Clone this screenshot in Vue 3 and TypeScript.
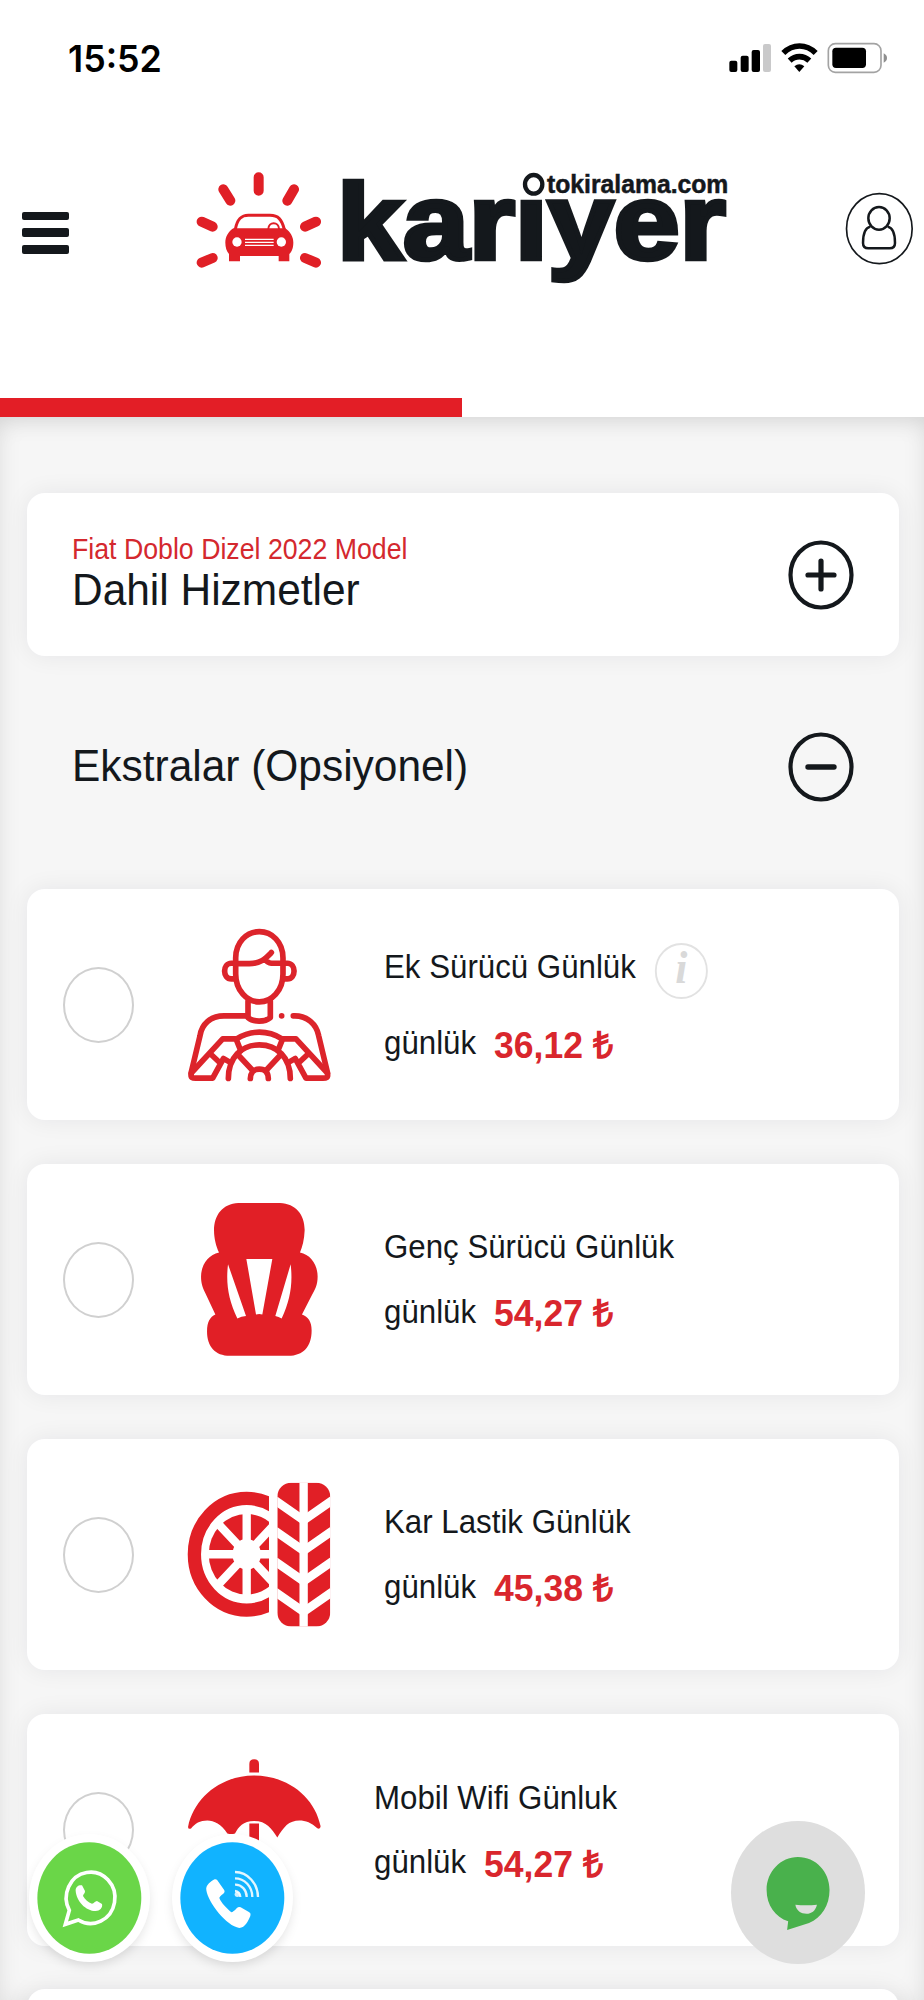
<script setup lang="ts">
type IconName = 'driver' | 'seat' | 'tire' | 'umbrella'

interface Extra {
  icon: IconName
  title: string
  price: string
  info?: boolean
}

const extras: Extra[] = [
  { icon: 'driver', title: 'Ek Sürücü Günlük', price: '36,12 ₺', info: true },
  { icon: 'seat', title: 'Genç Sürücü Günlük', price: '54,27 ₺' },
  { icon: 'tire', title: 'Kar Lastik Günlük', price: '45,38 ₺' },
  { icon: 'umbrella', title: 'Mobil Wifi Günluk', price: '54,27 ₺' },
]

const progress = 50
const chevrons = [212, 303.5, 395, 486.5]
</script>

<template>
  <div class="screen">
    <div class="status">
      <span class="time">15:52</span>
      <svg class="status-icons" viewBox="72 0 600 240">
        <rect x="88" y="122" width="24" height="34" rx="6" />
        <rect x="122" y="107" width="24" height="49" rx="6" />
        <rect x="155" y="90" width="25" height="66" rx="6" />
        <rect x="189" y="72" width="24" height="84" rx="6" fill="#c9c9ca" />
        <g fill="none" stroke="#000" stroke-width="17">
          <path d="M250 99 C278 71 319 71 347 99" />
          <path d="M269 122 C286 106 311 106 328 122" />
        </g>
        <path d="M283 139 Q298 127 313 139 L298 156 Z" />
        <rect x="385" y="71" width="158" height="86" rx="21" fill="none" stroke="#a3a3a3" stroke-width="5" />
        <rect x="397" y="83" width="101" height="61" rx="11" />
        <path d="M551 100 Q561 105 561 114 Q561 123 551 128 Z" fill="#8f8f8f" />
      </svg>
    </div>

    <header class="header">
      <button class="menu" aria-label="Menü"><i /><i /><i /></button>
      <svg class="logo" viewBox="0 0 1680 420">
        <g stroke="#e01f26" stroke-width="30" stroke-linecap="round">
          <path d="M236 82V122M130 118L151 152M342 118L322 152M65 215L98 230M408 215L375 230M65 338L98 324M408 338L375 324" />
        </g>
        <path d="M166 238 C172 205 185 196 205 196 H270 C295 196 305 208 313 238" fill="none" stroke="#e01f26" stroke-width="9" />
        <path d="M265 237 C265 214 297 214 297 237" fill="none" stroke="#e01f26" stroke-width="6" />
        <path d="M160 235 H316 C332 246 340 262 340 278 C340 298 332 308 328 312 V334 H296 V318 H180 V334 H147 V312 C140 304 136 292 136 278 C136 260 145 245 160 235Z" fill="#e01f26" />
        <g fill="#fff">
          <circle cx="171" cy="276" r="14" /><circle cx="304" cy="276" r="14" />
          <path d="M195 266H281V270H195ZM195 275H281V279H195ZM195 284H281V288H195Z" />
        </g>
        <text class="brand" x="471" y="326" textLength="1166" lengthAdjust="spacingAndGlyphs">karıyer</text>
        <ellipse cx="1061" cy="103" rx="26" ry="28" fill="#fff" stroke="#14181c" stroke-width="13" />
        <text class="domain" x="1101" y="128" textLength="544" lengthAdjust="spacingAndGlyphs">tokiralama.com</text>
      </svg>
      <svg class="user" viewBox="1214 127 206 220" fill="none" stroke="#14181c">
        <ellipse cx="1317" cy="237" rx="98.500" ry="105" stroke-width="5" />
        <g stroke-width="7.500">
          <ellipse cx="1316" cy="206" rx="32" ry="34" />
          <path d="M1290 231 C1272 235 1268 260 1268 280 Q1268 296 1284 296 H1348 Q1364 296 1364 280 C1364 258 1360 235 1342 231" />
        </g>
      </svg>
    </header>

    <div class="track"><div class="bar" :style="{ width: progress + '%' }" /></div>

    <main class="content">
      <section class="card included">
        <div class="heading">
          <p class="model">Fiat Doblo Dizel 2022 Model</p>
          <h2>Dahil Hizmetler</h2>
        </div>
        <svg class="toggle" viewBox="0 0 66 70" fill="none" stroke="#14181c">
          <ellipse cx="33" cy="35" rx="30.5" ry="32.5" stroke-width="4.2" />
          <path d="M20 35H46M33 21V49" stroke-width="5.2" stroke-linecap="round" />
        </svg>
      </section>

      <section class="section-head">
        <h2>Ekstralar (Opsiyonel)</h2>
        <svg class="toggle" viewBox="0 0 66 70" fill="none" stroke="#14181c">
          <ellipse cx="33" cy="35" rx="30.5" ry="32.5" stroke-width="4.2" />
          <path d="M20 35H46" stroke-width="5.4" stroke-linecap="round" />
        </svg>
      </section>

      <article v-for="extra in extras" :key="extra.title" class="card extra">
        <span class="radio" />

        <svg v-if="extra.icon === 'driver'" class="icon" viewBox="480 25 480 695">
          <g fill="none" stroke="#dc242b" stroke-width="17" stroke-linecap="round" stroke-linejoin="round">
            <path d="M647 232 C647 185 680 153 718 153 C756 153 789 185 789 232 V280 C789 330 755 364 718 364 C681 364 647 330 647 280 Z" />
            <path d="M647 248H634C607 248 607 295 634 295H645M789 248H802C829 248 829 295 802 295H791" />
            <path d="M647 249H688C722 249 735 235 754 216M737 238C745 248 750 248 765 248H789" />
            <path d="M684 362V411C700 425 735 425 751 411V362" />
            <path d="M682 406H612C570 406 545 432 540 465L513 578M820 406C862 404 890 432 896 465L923 578" />
            <path d="M515 576L608 475H648L662 510M514 578C510 592 518 593 527 593H578L610 534L628 544M570 519L598 545" />
            <path d="M921 576L828 475H788L774 510M922 578C926 592 918 593 909 593H858L826 534L808 544M866 519L838 545" />
            <path d="M650 475C692 448 744 448 786 475" />
            <path d="M625 594C625 530 665 493 718 493C771 493 811 530 811 594" />
            <path d="M656 525L698 570M780 525L738 570" />
            <path d="M691 594C692 575 700 566 718 566C736 566 744 575 745 594" />
          </g>
          <circle cx="785" cy="406" r="8.5" fill="#dc242b" />
        </svg>

        <svg v-else-if="extra.icon === 'seat'" class="icon" viewBox="480 12 480 695">
          <path fill="#e11f26" d="M655 129H780C828 131 855 165 854 212C853 240 847 262 840 278C872 284 893 315 893 350C893 375 885 390 876 405L846 464C865 472 875 485 875 512C875 560 850 588 805 588H630C585 588 561 560 561 515C561 485 570 472 586 464L556 400C547 382 543 370 543 350C543 315 565 285 597 278C588 260 582 235 582 212C582 165 608 131 655 129Z" />
          <g fill="#fff">
            <path d="M679 297H757L727 464Q718 461 708 464Z" />
            <path d="M624 313C617 370 625 420 652 476Q664 468 678 468Z" />
            <path d="M812 313C819 370 811 420 785 476Q776 470 766 468Z" />
          </g>
        </svg>

        <svg v-else-if="extra.icon === 'tire'" class="icon" viewBox="480 28 480 695">
          <defs>
            <clipPath id="wheel"><rect x="480" y="150" width="267" height="450" /></clipPath>
            <clipPath id="tread"><rect x="772" y="159" width="159" height="432" rx="42" /></clipPath>
          </defs>
          <g clip-path="url(#wheel)">
            <ellipse cx="680" cy="374" rx="157" ry="167.5" fill="none" stroke="#e11f26" stroke-width="40" />
            <ellipse cx="680" cy="374" rx="114" ry="121" fill="#e11f26" />
            <path d="M680 240V510M550 374H800M592 280L768 468M768 280L592 468" stroke="#fff" stroke-width="25" />
            <ellipse cx="680" cy="374" rx="43" ry="46" fill="#fff" />
          </g>
          <g clip-path="url(#tread)">
            <rect x="772" y="159" width="159" height="432" fill="#e11f26" />
            <path d="M851 150V600" stroke="#fff" stroke-width="25" />
            <path v-for="y in chevrons" :key="y" :d="`M765 ${y}L851 ${y + 60}L937 ${y}`" fill="none" stroke="#fff" stroke-width="26" />
          </g>
        </svg>

        <svg v-else class="icon narrow" viewBox="480 41 450 695" fill="#e11f26">
          <path d="M688 217V191Q688 177 702.500 177Q717 177 717 191V217ZM688 370H717V500H688Z" />
          <path d="M504 380C522 292 602 226 702 226C804 226 884 290 902 378Q901 388 892 384C862 354 822 355 800 374C790 384 780 397 772 412C755 385 740 362 702 362C670 362 655 380 645 400Q634 403 622 400C604 372 582 361 562 361C540 361 525 370 513 385Q504 388 504 380Z" />
        </svg>

        <div class="details" :class="{ spaced: extra.info }">
          <div class="title">
            <span>{{ extra.title }}</span>
            <span v-if="extra.info" class="info">i</span>
          </div>
          <div class="rate">
            <span>günlük</span>
            <strong>{{ extra.price }}</strong>
          </div>
        </div>
      </article>

      <article class="card extra" />
    </main>

    <button class="bubble whatsapp" aria-label="WhatsApp">
      <svg viewBox="28 399 363 385" fill="none">
        <ellipse cx="209" cy="591" rx="156" ry="167" fill="#6ad648" />
        <path d="M137 670L149 628A73 77 0 1 1 176 657Z" stroke="#fff" stroke-width="11" />
        <path fill="#fff" d="M168 569C167 557 178 551 187 553L196 570C197 577 190 580 190 585C196 596 206 604 217 608C223 608 226 600 232 600L247 609C250 620 240 630 228 630C198 630 170 600 168 569Z" />
      </svg>
    </button>

    <button class="bubble call" aria-label="Telefon">
      <svg viewBox="456 399 363 385" fill="none">
        <ellipse cx="637" cy="591" rx="156" ry="167" fill="#11b3ff" />
        <path fill="#fff" d="M559 568C556 552 573 541 584 535Q588 533 592 538L613 568Q616 573 610 578Q598 586 598 591C604 606 620 622 634 634Q640 633 650 622Q656 616 662 619L688 634Q694 638 691 645C684 660 676 680 658 681C620 676 565 606 559 568Z" />
        <path d="M645 570A17 18 0 0 1 661 588M645 551A34 36 0 0 1 680 588M645 532A52 56 0 0 1 697 588M645 513A70 76 0 0 1 714 588" stroke="#fff" stroke-opacity=".88" stroke-width="7" />
        <circle cx="652" cy="580" r="8" fill="#fff" fill-opacity=".8" />
      </svg>
    </button>

    <button class="chat" aria-label="Canlı destek">
      <svg viewBox="1030 362 374 431" preserveAspectRatio="none">
        <path fill="#49b14c" d="M1216 470C1266 470 1304 514 1304 569C1304 615 1282 652 1247 668L1186 689L1189 663C1153 650 1129 615 1129 569C1129 514 1168 470 1216 470Z" />
        <path fill="#dedede" d="M1209 613Q1239 617 1269 613C1265 632 1253 640 1240 640C1225 640 1211 630 1209 613Z" />
      </svg>
    </button>
  </div>
</template>

<style>
body {
  margin: 0;
  background: #fff;
}
</style>

<style scoped>
.screen {
  position: relative;
  width: 924px;
  height: 2000px;
  overflow: hidden;
  display: flex;
  flex-direction: column;
  background: #fff;
  color: #14181c;
  font-family: 'Liberation Sans', Arial, sans-serif;
}

h2,
p {
  margin: 0;
  font-weight: 400;
}

button {
  padding: 0;
  border: 0;
  background: none;
}

svg {
  display: block;
  flex: none;
}

.status {
  height: 130px;
  display: flex;
  justify-content: space-between;
  align-items: flex-start;
}

.time {
  margin: 37px 0 0 68px;
  font: 600 37.5px/44px Inter, sans-serif;
  color: #000;
  transform: scaleX(0.955);
  transform-origin: left;
}

.status-icons {
  width: 200px;
  height: 80px;
  margin-top: 20px;
}

.header {
  height: 268.300px;
  box-sizing: border-box;
  padding: 20px 10px 0 22px;
  display: flex;
  align-items: flex-start;
}

.menu {
  display: flex;
  flex-direction: column;
  gap: 8px;
  margin: 62px 111px 0 0;
}

.menu i {
  width: 47px;
  height: 8.7px;
  border-radius: 2px;
  background: #14181c;
}

.logo {
  width: 560px;
  height: 140px;
}

.brand {
  font: 700 320px 'Liberation Sans', sans-serif;
  fill: #14181c;
  stroke: #14181c;
  stroke-width: 14px;
}

.domain {
  font: 700 76px 'Liberation Sans', sans-serif;
  fill: #14181c;
  stroke: #14181c;
  stroke-width: 1.500px;
}

.user {
  width: 68.7px;
  height: 73.300px;
  margin: 42.300px 0 0 104.700px;
}

.track {
  height: 19.500px;
  flex: none;
  background: #fff;
}

.bar {
  height: 100%;
  background: #e31e26;
}

.content {
  flex: none;
  height: 1583px;
  box-sizing: border-box;
  padding: 76.300px 25.500px 0 27px;
  background: #f6f6f6;
  box-shadow:
    inset 0 0 24px rgba(0, 0, 0, 0.07),
    inset 0 14px 26px -12px rgba(0, 0, 0, 0.1);
}

.card {
  box-sizing: border-box;
  border-radius: 18px;
  background: #fff;
  box-shadow: 0 0 24px rgba(20, 20, 40, 0.07);
}

.included,
.section-head {
  display: flex;
  justify-content: space-between;
  align-items: center;
  padding: 0 45px;
}

.included {
  height: 163px;
}

.section-head {
  height: 221px;
  margin-bottom: 11.300px;
}

.section-head h2,
.heading {
  transform: scaleX(0.943);
  transform-origin: left;
}

.section-head h2 {
  margin-top: -2px;
}

h2 {
  font-size: 45px;
  line-height: 50px;
}

.heading {
  margin-top: -2px;
}

.model {
  font-size: 29.500px;
  line-height: 32px;
  color: #d4282e;
  transform: scaleX(0.96);
  transform-origin: left;
}

.toggle {
  width: 66px;
  height: 70px;
}

.extra {
  height: 231.500px;
  margin-bottom: 43.700px;
  display: flex;
  align-items: flex-start;
}

.radio {
  flex: none;
  box-sizing: border-box;
  width: 71px;
  height: 76px;
  margin: 78px 46px 0 35.700px;
  border: 2px solid #d0d0d0;
  border-radius: 50%;
}

.icon {
  width: 160px;
  height: 231.500px;
}

.icon.narrow {
  width: 150px;
}

.details {
  margin: 63.500px 0 0 44.300px;
  font-size: 33px;
  white-space: nowrap;
  transform: scaleX(0.947);
  transform-origin: left;
}

.title {
  height: 40px;
  line-height: 40px;
  display: flex;
  align-items: center;
}

.rate {
  display: flex;
  align-items: flex-start;
  gap: 19px;
  margin-top: 22.500px;
  line-height: 44px;
}

.rate strong {
  margin-top: 1.500px;
  font-size: 37.500px;
  color: #d9262d;
}

.details.spaced {
  margin-top: 58.700px;
}

.spaced .rate {
  margin-top: 34px;
}

.info {
  box-sizing: border-box;
  width: 56px;
  height: 56px;
  margin: 8px 0 0 20px;
  border: 2.500px solid #e2e2e2;
  border-radius: 50%;
  text-align: center;
  font: italic 700 46px/46px 'Liberation Serif', serif;
  color: #d9d9d9;
}

.bubble {
  position: absolute;
  top: 1833.500px;
  width: 121px;
  height: 128.300px;
  border-radius: 50%;
  background: #fff;
  box-shadow: 0 5px 12px -2px rgba(0, 0, 0, 0.13);
}

.bubble svg,
.chat svg {
  width: 100%;
  height: 100%;
}

.whatsapp {
  left: 29.300px;
}

.call {
  left: 172px;
}

.chat {
  position: absolute;
  left: 730.500px;
  top: 1820.700px;
  width: 134.500px;
  height: 143.700px;
  border-radius: 50%;
  background: #dedede;
}
</style>
